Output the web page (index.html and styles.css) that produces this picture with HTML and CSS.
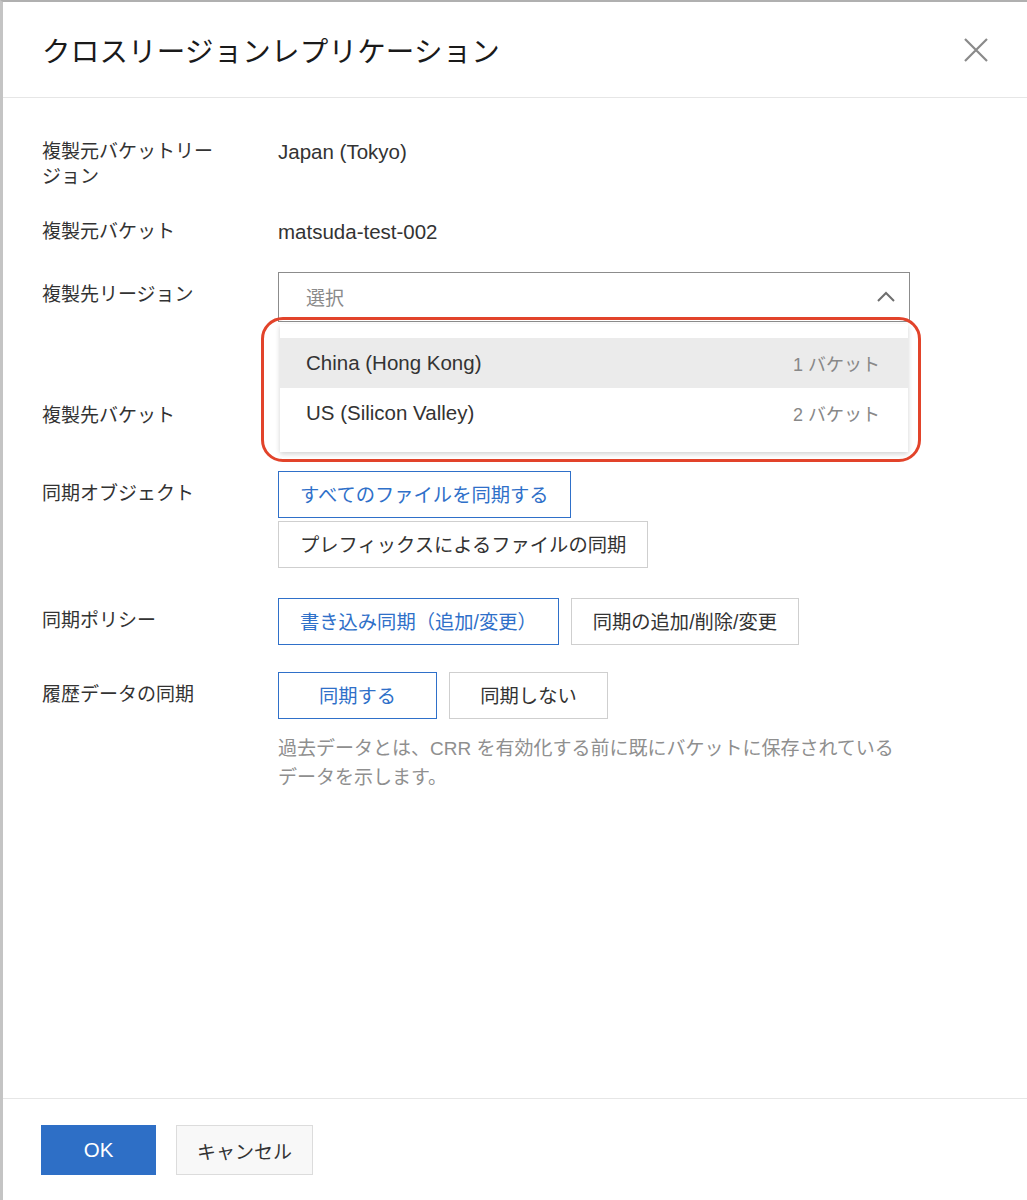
FILE: index.html
```html
<!DOCTYPE html>
<html lang="ja">
<head>
<meta charset="utf-8">
<title>クロスリージョンレプリケーション</title>
<link rel="stylesheet" href="styles.css">
</head>
<body>
<div class="dialog">
  <header class="dlg-head">
    <h1 class="dlg-title">クロスリージョンレプリケーション</h1>
    <button class="close" aria-label="close">
      <svg width="26" height="26" viewBox="0 0 26 26"><path d="M2 2 L24 24 M24 2 L2 24" stroke="#8a8a8a" stroke-width="2.2" fill="none"/></svg>
    </button>
  </header>

  <main class="dlg-body">
    <div class="row row-1">
      <div class="label">複製元バケットリー<br>ジョン</div>
      <div class="value en">Japan (Tokyo)</div>
    </div>
    <div class="row row-2">
      <div class="label">複製元バケット</div>
      <div class="value en">matsuda-test-002</div>
    </div>
    <div class="row row-select">
      <div class="label label-pad">複製先リージョン</div>
      <div class="field">
        <div class="select">
          <span class="placeholder">選択</span>
          <svg class="chev" width="20" height="12" viewBox="0 0 20 12"><path d="M2 10 L10 2 L18 10" stroke="#6e6e6e" stroke-width="2" fill="none"/></svg>
        </div>
        <div class="dropdown">
          <div class="opt active"><span class="en">China (Hong Kong)</span><span class="count">1 バケット</span></div>
          <div class="opt"><span class="en">US (Silicon Valley)</span><span class="count">2 バケット</span></div>
        </div>
        <div class="highlight"></div>
      </div>
    </div>
    <div class="row row-hidden">
      <div class="label label-pad">複製先バケット</div>
      <div class="field"></div>
    </div>
    <div class="row row-objects">
      <div class="label label-pad">同期オブジェクト</div>
      <div class="btn-stack">
        <button class="opt-btn on">すべてのファイルを同期する</button>
        <button class="opt-btn">プレフィックスによるファイルの同期</button>
      </div>
    </div>
    <div class="row row-policy">
      <div class="label label-pad">同期ポリシー</div>
      <div class="btn-row">
        <button class="opt-btn on">書き込み同期（追加/変更）</button>
        <button class="opt-btn">同期の追加/削除/変更</button>
      </div>
    </div>
    <div class="row">
      <div class="label label-pad">履歴データの同期</div>
      <div class="field">
        <div class="btn-row">
          <button class="opt-btn on wide">同期する</button>
          <button class="opt-btn wide">同期しない</button>
        </div>
        <p class="help">過去データとは、CRR を有効化する前に既にバケットに保存されている<br>データを示します。</p>
      </div>
    </div>
  </main>

  <footer class="dlg-foot">
    <button class="btn-primary en">OK</button>
    <button class="btn-cancel">キャンセル</button>
  </footer>
</div>
</body>
</html>
```

FILE: styles.css
```css
html, body {
  margin: 0;
  padding: 0;
  background: #ffffff;
}
body {
  font-family: "Liberation Sans", "Noto Sans CJK JP", sans-serif;
  color: #333333;
  font-size: 19px;
}
.dialog {
  box-sizing: border-box;
  height: 1200px;
  border-left: 3px solid #c4c4c4;
  border-top: 2px solid #b0b0b0;
  display: flex;
  flex-direction: column;
  background: #fff;
}
.dlg-head {
  height: 96px;
  box-sizing: border-box;
  border-bottom: 1px solid #e6e6e6;
  display: flex;
  align-items: center;
  justify-content: space-between;
  padding: 0 38px 0 39px;
}
.dlg-title {
  margin: 0;
  font-family: "Noto Sans CJK JP", sans-serif;
  font-weight: 400;
  font-size: 28.5px;
  color: #1a1a1a;
  letter-spacing: 0.2px;
}
.close {
  border: 0;
  background: transparent;
  padding: 0;
  width: 26px;
  height: 26px;
  display: flex;
}
.dlg-body {
  flex: 1;
  padding: 42px 0 0 39px;
}
.row {
  display: flex;
  margin-bottom: 28px;
}
.row-1 {
  margin-bottom: 31px;
}
.row-2 {
  margin-bottom: 27px;
}
.label {
  width: 236px;
  flex: none;
  line-height: 24.5px;
  color: #333;
}
.label-pad {
  padding-top: 11px;
}
.value {
  line-height: 24px;
  color: #333;
}
.en {
  font-size: 20.5px;
}
.field {
  position: relative;
}
.row-select {
  margin-bottom: 71px;
}
.row-objects {
  margin-bottom: 30px;
}
.row-policy {
  margin-bottom: 27px;
}
.select {
  box-sizing: border-box;
  width: 632px;
  height: 50px;
  border: 1px solid #8c8c8c;
  display: flex;
  align-items: center;
  justify-content: space-between;
  padding: 0 13px 0 27px;
}
.placeholder {
  color: #8a8a8a;
}
.dropdown {
  position: absolute;
  left: 2px;
  top: 52px;
  width: 628px;
  box-sizing: border-box;
  padding: 14px 0 14px;
  background: #fff;
  box-shadow: 0 2px 5px rgba(0, 0, 0, 0.18);
  z-index: 2;
}
.opt {
  height: 50px;
  display: flex;
  align-items: center;
  justify-content: space-between;
  padding: 0 28px 0 26px;
  color: #333;
}
.opt.active {
  background: #ebebeb;
}
.count {
  color: #888;
  font-size: 18px;
}
.highlight {
  position: absolute;
  left: -17px;
  top: 45px;
  width: 660px;
  height: 145px;
  box-sizing: border-box;
  border: 3.5px solid #e2432a;
  border-radius: 22px;
  z-index: 3;
}
.row-hidden .field {
  height: 50px;
}
.btn-stack {
  display: flex;
  flex-direction: column;
  align-items: flex-start;
  gap: 3px;
}
.btn-row {
  display: flex;
  gap: 12px;
}
.opt-btn {
  box-sizing: border-box;
  height: 47px;
  padding: 0 21px;
  border: 1.5px solid #cfcfcf;
  background: #fff;
  font-family: inherit;
  font-size: 19.3px;
  color: #333;
}
.opt-btn.on {
  border: 1.5px solid #2f70c9;
  color: #2f70c9;
}
.opt-btn.wide {
  width: 159px;
}
.help {
  margin: 15px 0 0;
  color: #8f8f8f;
  font-size: 19px;
  line-height: 29px;
}
.dlg-foot {
  height: 102px;
  box-sizing: border-box;
  border-top: 1px solid #e6e6e6;
  display: flex;
  align-items: flex-start;
  gap: 20px;
  padding: 26px 0 0 38px;
}
.btn-primary {
  width: 115px;
  height: 50px;
  background: #2e6fc6;
  color: #fff;
  border: 0;
  font-family: inherit;
}
.btn-cancel {
  width: 137px;
  height: 50px;
  background: #f8f8f8;
  border: 1.5px solid #dcdcdc;
  color: #333;
  font-family: inherit;
  font-size: 19px;
}
```
